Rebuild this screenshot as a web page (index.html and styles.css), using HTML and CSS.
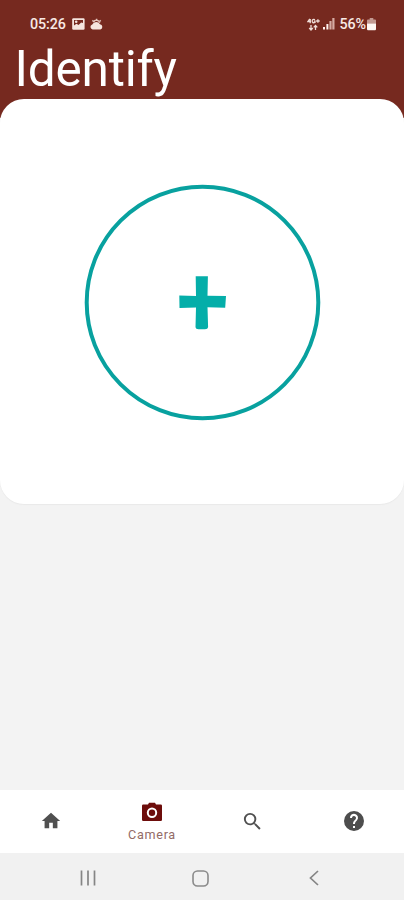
FILE: index.html
```html
<!DOCTYPE html>
<html lang="en">
<head>
<meta charset="utf-8">
<title>Identify</title>
<link rel="stylesheet" href="styles.css">
</head>
<body>
<div class="app">
  <main class="content">
    <header class="header">
      <div class="status">
        <div class="status-left">
          <span class="time">05:26</span>
          <svg class="photo-icon" width="13" height="13" viewBox="0 0 13 13"><rect x=".2" y=".2" width="12.400" height="11.600" rx="1.200" fill="#f5e5df"/><path d="M2 2h9v3L9.200 4.400 6.500 7 4.500 5.800 2 7.600z" fill="#76291f"/><circle cx="4.200" cy="3.800" r="1.300" fill="#f5e5df"/></svg>
          <svg width="13" height="12" viewBox="0 0 13 12"><path d="M2.600 11.400a2.500 2.500 0 0 1-.3-4.900 4.300 4.300 0 0 1 7.700-.2 2.600 2.600 0 0 1 .4 5.100z" fill="#f5e5df"/><path d="M3.500 4.200a3.300 3.300 0 0 1 6.200.6M6.600.8v1.500M2.400 2.400l1 .9M10.800 2.400l-1 .9" fill="none" stroke="#e3c4bc" stroke-width="1.500"/></svg>
        </div>
        <div class="status-right">
          <svg width="13" height="13" viewBox="0 0 13 13"><g fill="none" stroke="#efdcd7" stroke-width="1.300"><path d="M2.800.8.9 3.500H4M3.200 1v4.200M8 1.700Q5.200.6 5.200 3T8 4.500V3.100H6.800M9.100 3h3.600M10.900 1.200v3.600"/><path d="M4 7v5M2.200 10 4 12l1.800-2M8.500 12V7.400M6.700 9.400l1.800-2 1.800 2"/></g></svg>
          <svg width="12" height="12" viewBox="0 0 12 12"><path d="M0 9h2v2.500H0zM3.400 6h2v5.500h-2z" fill="#fff2ee"/><path d="M6.400 3h2.200v8.500H6.400zM9.300 0h2.200v11.500H9.300z" fill="#d5aaa2"/></svg>
          <span class="percent">56%</span>
          <svg class="battery" width="9" height="13" viewBox="0 0 9 13"><path d="M2.700 0h3.600v1.500H8q1 0 1 1v3.200H0V2.500q0-1 1-1h1.700z" fill="#c39991"/><path d="M0 5.500h9V11q0 1.200-1 1.200H1Q0 12.200 0 11z" fill="#fff7f3"/></svg>
        </div>
      </div>
      <h1 class="title">Identify</h1>
    </header>
    <section class="card">
      <button class="add" aria-label="Add photo">
        <svg class="ring" width="236" height="236" viewBox="0 0 236 236"><circle cx="118.500" cy="117.500" r="115.800" fill="none" stroke="#08a19f" stroke-width="4"/><path d="M111.700 91.300H123.900L123.500 110.700 142 111 141.200 122.700 123.500 122.200 124.100 142.300Q123.800 144.200 121 144.200H114.500Q111.700 144.200 111.500 142.300L112 122.400 95.500 123 95.300 110.500 112 110.900z" fill="#04aea9"/></svg>
      </button>
    </section>
  </main>
  <nav class="tabs">
    <div class="tab"><svg width="22" height="22" viewBox="0 0 24 24"><path d="M10 20v-6h4v6h5v-8h3L12 3 2 12h3v8z" fill="#505050"/></svg></div>
    <div class="tab active"><svg width="24" height="24" viewBox="0 0 24 24"><path d="M9 1.800 8 3.600H3.200Q2 3.600 2 4.800V18.800Q2 20 3.200 20H20.800Q22 20 22 18.800V4.800Q22 3.600 20.800 3.600H16L15 1.800z" fill="#6d0d0b"/><circle cx="12" cy="11.800" r="4.200" fill="#6d0d0b" stroke="#fff" stroke-width="2"/></svg><span class="label">Camera</span></div>
    <div class="tab"><svg width="23" height="23" viewBox="0 0 24 24"><path d="M15.500 14h-.79l-.28-.27A6.470 6.470 0 0 0 16 9.500 6.500 6.500 0 1 0 9.500 16c1.610 0 3.090-.59 4.230-1.570l.27.28v.79l5 4.990L20.490 19zm-6 0a4.500 4.500 0 1 1 0-9 4.500 4.500 0 0 1 0 9z" fill="#505050"/></svg></div>
    <div class="tab"><svg width="24" height="24" viewBox="0 0 24 24"><path d="M12 2a10 10 0 1 0 0 20 10 10 0 0 0 0-20zm1 17h-2v-2h2zm2.070-7.750-.9.920C13.450 12.900 13 13.500 13 15h-2v-.5c0-1.100.45-2.100 1.170-2.830l1.240-1.260A2 2 0 1 0 10 9H8a4 4 0 1 1 7.070 2.250z" fill="#4d4d4d"/></svg></div>
  </nav>
  <div class="system">
    <svg class="recents" width="16" height="16" viewBox="0 0 16 16"><path d="M1.500.5v15M8 .5v15M14.500.5v15" stroke="#858585" stroke-width="1.700"/></svg>
    <svg width="17" height="17" viewBox="0 0 17 17"><rect x="1" y="1" width="15" height="15" rx="4.500" fill="none" stroke="#8a8a8a" stroke-width="1.600"/></svg>
    <svg class="back" width="10" height="16" viewBox="0 0 10 16"><path d="M9 1 1.500 8 9 15" fill="none" stroke="#858585" stroke-width="1.700"/></svg>
  </div>
</div>
</body>
</html>
```
FILE: styles.css
```css
* { box-sizing: border-box; }

body {
  margin: 0;
  font-family: Roboto, "Liberation Sans", sans-serif;
}

.app {
  display: flex;
  flex-direction: column;
  height: 900px;
  overflow: hidden;
  background: #f3f3f3;
}

svg { display: block; flex: none; }

.content {
  flex: 1;
  background: linear-gradient(#76291f 0 118px, #f3f3f3 118px);
}

.header { height: 99.4px; color: #fff; }

.status {
  display: flex;
  justify-content: space-between;
  height: 40px;
  padding: 8px 28px 0 30px;
  font-size: 14.3px;
  font-weight: 500;
  line-height: 32px;
  letter-spacing: -0.1px;
  color: #f8e9e5;
}

.status-left, .status-right { display: flex; align-items: center; }
.photo-icon { margin: 0 5px 0 6px; }
.status-right svg + svg { margin-left: 3px; }
.status-right .percent { margin-left: 5px; }
.battery { margin-left: 1px; }

.title {
  margin: 0;
  padding-left: 14.5px;
  font-size: 49.5px;
  font-weight: 400;
  line-height: 58px;
  letter-spacing: -0.2px;
}

.card {
  display: flex;
  align-items: center;
  justify-content: center;
  height: 405px;
  padding-top: 2px;
  border-radius: 24px;
  background: #fff;
  box-shadow: 0 1px 1px #e9e9e9;
}

.add {
  padding: 0;
  border: 0;
  background: none;
}

.ring { overflow: visible; }

.tabs {
  display: grid;
  grid-template-columns: repeat(4, 1fr);
  height: 63px;
  padding-bottom: 1px;
  background: #fff;
}

.tab {
  display: flex;
  flex-direction: column;
  align-items: center;
  justify-content: center;
}

.active { justify-content: flex-start; padding-top: 11px; }

.label {
  margin-top: 2px;
  padding-left: 1px;
  font-size: 12.6px;
  line-height: 16px;
  letter-spacing: 0.7px;
  color: #936b66;
}

.system {
  display: flex;
  align-items: center;
  height: 47px;
  padding: 3px 0 0 80px;
  background: #f1f1f1;
}

.recents { margin-right: 96px; }
.back { margin-left: 100px; }
```
